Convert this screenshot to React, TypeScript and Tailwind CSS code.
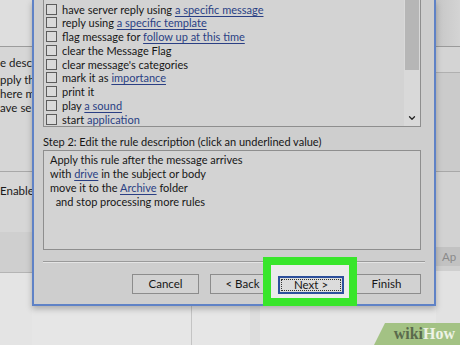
import { ChevronDown } from 'lucide-react';

const font = { fontFamily: 'Lato, "Open Sans", sans-serif' };

type Part = { t: string; link?: boolean };

const actions: Part[][] = [
  [{ t: 'have server reply using ' }, { t: 'a specific message', link: true }],
  [{ t: 'reply using ' }, { t: 'a specific template', link: true }],
  [{ t: 'flag message for ' }, { t: 'follow up at this time', link: true }],
  [{ t: 'clear the Message Flag' }],
  [{ t: "clear message's categories" }],
  [{ t: 'mark it as ' }, { t: 'importance', link: true }],
  [{ t: 'print it' }],
  [{ t: 'play ' }, { t: 'a sound', link: true }],
  [{ t: 'start ' }, { t: 'application', link: true }],
];

const description: Part[][] = [
  [{ t: 'Apply this rule after the message arrives' }],
  [{ t: 'with ' }, { t: 'drive', link: true }, { t: ' in the subject or body' }],
  [{ t: 'move it to the ' }, { t: 'Archive', link: true }, { t: ' folder' }],
  [{ t: '\u00a0\u00a0and stop processing more rules' }],
];

function Line({ parts }: { parts: Part[] }) {
  return (
    <>
      {parts.map((p, i) =>
        p.link ? (
          <span key={i} className="text-[#2a3f84] underline underline-offset-2 decoration-[#2a3f84]">
            {p.t}
          </span>
        ) : (
          <span key={i}>{p.t}</span>
        )
      )}
    </>
  );
}

function Btn({ label, className = '' }: { label: string; className?: string }) {
  return (
    <div
      className={`h-[20px] flex items-center justify-center border border-[#8c8c8c] bg-[#d2d2d2] text-[11.5px] text-[#161616] ${className}`}
    >
      {label}
    </div>
  );
}

function LeftStrip() {
  return (
    <div className="w-[32px] shrink-0 flex flex-col text-[11.5px] text-[#1a1a1a] whitespace-nowrap">
      <div className="h-[47px] bg-[#dedede] border-b border-[#9c9c9c]" />
      <div className="h-[125px] bg-[#d6d6d6] border-b border-[#a8a8a8] flex flex-col pt-[9px] leading-[14px]">
        <div className="pb-[3px]">e desc</div>
        <div>pply th</div>
        <div>here m</div>
        <div>ave se</div>
      </div>
      <div className="h-[60px] bg-[#d6d6d6] pt-[12px] leading-[14px]">Enable</div>
      <div className="h-[41px] bg-[#cfcfcf] border-b border-[#b4b4b4]" />
      <div className="flex-1 bg-[#e4e4e4]" />
    </div>
  );
}

function RightStrip() {
  return (
    <div className="flex-1 flex flex-col text-[11.5px] text-[#8a8a8a] whitespace-nowrap">
      <div className="h-[47px] bg-gradient-to-r from-[#c6c6c6] to-[#d4d4d4] border-b border-[#9a9a9a]" />
      <div className="h-[26px] bg-[#d4d4d4] border-b border-[#b0b0b0]" />
      <div className="h-[99px] bg-[#cbcbcb] border-b border-[#a8a8a8]" />
      <div className="h-[75px] bg-[#d2d2d2]" />
      <div className="h-[19px] bg-[#c2c2c2] flex items-center pl-[6px]">Ap</div>
      <div className="h-[5px] bg-[#cfcfcf]" />
      <div className="flex-1 bg-[#e2e2e2]" />
    </div>
  );
}

function Dialog() {
  return (
    <div className="relative z-10 h-[306px] bg-[#cecece] border-x-2 border-b-2 border-[#5f82c6] shadow-[0_3px_6px_rgba(0,0,0,0.25)] flex flex-col pl-[9px] pr-[13px] text-[#161616]">
      <div className="h-[127px] bg-[#d3d3d3] border-x border-b border-[#8e8e8e] flex">
        <div className="flex-1 flex flex-col justify-end overflow-hidden">
          {actions.map((row, i) => (
            <div key={i} className="h-[13.75px] shrink-0 flex items-center gap-[5px] pl-[2px] text-[11px] whitespace-nowrap">
              <div className="w-[11px] h-[11px] border border-[#5c5c5c] bg-[#dadada] shrink-0" />
              <div className="leading-[13px]">
                <Line parts={row} />
              </div>
            </div>
          ))}
        </div>
        <div className="w-[16px] flex flex-col bg-[#d9d9d9]">
          <div className="h-[70px] bg-[#b6b6b6] mx-[1px]" />
          <div className="flex-1" />
          <div className="h-[16px] flex items-center justify-center">
            <ChevronDown size={10} strokeWidth={3} className="text-[#222]" />
          </div>
        </div>
      </div>
      <div className="mt-[7px] h-[16px] leading-[16px] text-[11px] whitespace-nowrap">
        Step 2: Edit the rule description (click an underlined value)
      </div>
      <div className="h-[100px] bg-[#d3d3d3] border border-[#8e8e8e] pl-[6px] pt-[2px] text-[11px] leading-[14px] whitespace-pre">
        {description.map((row, i) => (
          <div key={i}>
            <Line parts={row} />
          </div>
        ))}
      </div>
      <div className="mt-[11px] w-[382px] h-px bg-[#9a9a9a] shadow-[0_1px_0_#e4e4e4]" />
      <div className="mt-[12px] flex items-start">
        <Btn label="Cancel" className="ml-[89px] w-[68px]" />
        <Btn label="< Back" className="ml-[11px] w-[66px]" />
        <div className="relative ml-[3px]">
          <div className="absolute left-[-15px] top-[-17px] w-[94px] h-[49px] border-[8px] border-[#38e62b] bg-[#ebebeb]" />
          <div className="relative w-[66px] h-[18px] mt-[2px] border-2 border-[#2d4f9c] bg-[#dcdcdc] p-[1px]">
            <div className="h-full border border-dotted border-[#333] flex items-center justify-center text-[11.5px] text-[#161616]">
              Next &gt;
            </div>
          </div>
        </div>
        <Btn label="Finish" className="ml-[8px] w-[70px]" />
      </div>
    </div>
  );
}

export default function App() {
  return (
    <div style={font} className="relative w-[460px] h-[345px] overflow-hidden flex bg-[#e3e3e3]">
      <LeftStrip />
      <div className="w-[404px] shrink-0 flex flex-col">
        <Dialog />
        <div className="flex-1 flex bg-[#e6e6e6]">
          <div className="w-[160px] border-r border-[#c4c4c4]" />
          <div className="w-[58px]" />
          <div className="w-[10px] bg-[#dedede]" />
        </div>
      </div>
      <RightStrip />
      <div
        className="absolute right-0 bottom-0 w-[86px] h-[22px] bg-[#a3c284] [clip-path:polygon(11px_0,100%_0,100%_100%,0_100%)] flex items-center justify-end pr-[5px] text-[16px] font-bold leading-none"
        style={{ fontFamily: '"Liberation Serif", serif' }}
      >
        <span className="text-[#5a6a4c]">wiki</span>
        <span className="text-[#eef3e6]">How</span>
      </div>
    </div>
  );
}
